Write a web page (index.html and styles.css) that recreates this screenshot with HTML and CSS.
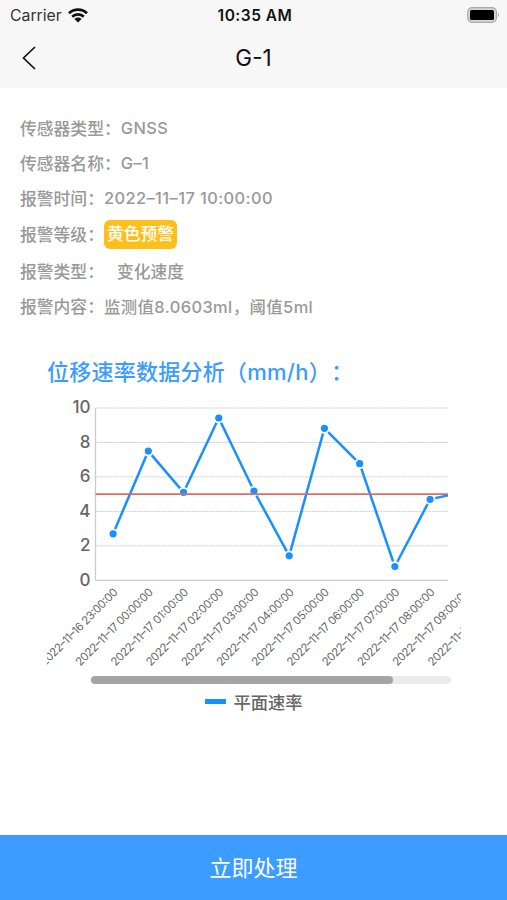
FILE: index.html
```html
<!DOCTYPE html>
<html lang="zh-CN">
  <head>
    <meta charset="UTF-8" />
    <title>G-1</title>
    <meta name="viewport" content="width=device-width, initial-scale=1.0" />
    <link rel="stylesheet" href="styles.css">
  </head>
  <body>
    <header>
      <div class="status-bar">
        <div class="carrier">
          <span>Carrier</span>
          <svg width="20" height="15" viewBox="0 0 20 15">
            <g fill="none" stroke="#111" stroke-width="2.7">
              <path d="M1 5.2 A13 13 0 0 1 19 5.2" />
              <path d="M4.2 8.7 A8.3 8.3 0 0 1 15.8 8.7" />
            </g>
            <path d="M6.4 11 A5.1 5.1 0 0 1 13.6 11 L10 14.6 Z" fill="#111" />
          </svg>
        </div>
        <div class="time">10:35 AM</div>
        <svg class="battery" width="34" height="17" viewBox="0 0 34 17">
          <rect x="1.7" y="0.7" width="28.8" height="14.6" rx="4.5" fill="#d4d4d4" stroke="#aaa" stroke-width="1.2" />
          <rect x="4" y="3" width="24" height="10" rx="1.5" fill="#000" />
          <path d="M32 5.7 Q34 7.9 32 10.1 Z" fill="#aaa" />
        </svg>
      </div>
      <div class="nav-bar">
        <svg class="back" width="14" height="24" viewBox="0 0 14 24">
          <path d="M13 1 L1.5 12 L13 23" fill="none" stroke="#111" stroke-width="1.7" />
        </svg>
        <h1>G-1</h1>
      </div>
    </header>

    <main>
      <div class="info">
        <p><span class="label">传感器类型：</span><span class="value">GNSS</span></p>
        <p><span class="label">传感器名称：</span><span class="value">G–1</span></p>
        <p><span class="label">报警时间：</span><span class="value">2022–11–17 10:00:00</span></p>
        <p class="level"><span class="label">报警等级：</span><span class="tag">黄色预警</span></p>
        <p><span class="label">报警类型：</span><span class="value indent">变化速度</span></p>
        <p><span class="label">报警内容：</span><span class="value">监测值8.0603ml，阈值5ml</span></p>
      </div>

      <section class="chart">
        <h2>位移速率数据分析（mm/h）：</h2>
        <svg id="chart" width="414" height="272" viewBox="0 0 414 272"></svg>
        <div class="scroll"><div class="thumb"></div></div>
        <div class="legend"><i></i><span>平面速率</span></div>
      </section>
    </main>

    <button class="submit">立即处理</button>

    <script>
      const chart = document.getElementById("chart");
      const values = [2.7, 7.5, 5.1, 9.42, 5.18, 1.42, 8.82, 6.77, 0.8, 4.7, 5.15];
      const labelCount = 12;
      const left = 48.5;
      const right = 401;
      const top0 = 13;
      const bottom = 185.3;
      const step = 35.22;

      const px = (i) => left + 17.6 + i * step;
      const py = (v) => bottom - (v * (bottom - top0)) / 10;

      function add(name, attrs, text) {
        const el = document.createElementNS("http://www.w3.org/2000/svg", name);
        for (let key in attrs) {
          el.setAttribute(key, attrs[key]);
        }
        if (text) el.textContent = text;
        chart.appendChild(el);
        return el;
      }

      // grid and y axis
      for (let v = 0; v <= 10; v += 2) {
        add("line", { x1: left, x2: right, y1: py(v), y2: py(v), class: v ? "grid" : "axis" });
        add("text", { x: 43.5, y: py(v) + 5.2, class: "y-label" }, String(v));
      }
      add("line", { x1: left, x2: left, y1: top0, y2: bottom, class: "axis" });

      // data line
      for (let i = 0; i < values.length - 1; i++) {
        let x2 = px(i + 1);
        let y2 = py(values[i + 1]);
        if (x2 > right) {
          y2 = py(values[i]) + ((y2 - py(values[i])) * (right - px(i))) / step;
          x2 = right;
        }
        add("line", { x1: px(i), y1: py(values[i]), x2: x2, y2: y2, class: "series" });
      }
      for (let i = 0; i < values.length - 1; i++) {
        add("circle", { cx: px(i), cy: py(values[i]), r: 4.5, class: "dot" });
      }

      // alarm threshold
      add("line", { x1: left, x2: right, y1: py(5), y2: py(5), class: "limit" });

      // x axis
      for (let i = 0; i < labelCount; i++) {
        const hour = String((i + 23) % 24).padStart(2, "0");
        const day = i === 0 ? "16" : "17";
        const x = px(i) + 5.5;
        const y = 198;
        add(
          "text",
          { x: x, y: y, textLength: 104, transform: `rotate(-45 ${x} ${y})`, class: "x-label" },
          `2022–11–${day} ${hour}:00:00`
        );
      }
    </script>
  </body>
</html>
```
FILE: styles.css
```css
* {
  box-sizing: border-box;
}

body {
  margin: 0;
  height: 900px;
  display: flex;
  flex-direction: column;
  overflow: hidden;
  background: #fff;
  font-family: Inter, "Noto Sans CJK SC", sans-serif;
}

header {
  height: 88px;
  background: #f7f7f7;
}

.status-bar {
  display: grid;
  grid-template-columns: 1fr auto 1fr;
  align-items: center;
  height: 30px;
  padding: 0 7px 0 10px;
  color: #333;
  font-size: 15.8px;
}

.carrier {
  display: flex;
  align-items: center;
  gap: 6px;
}

.time {
  color: #111;
  font-size: 15.5px;
  font-weight: 600;
  letter-spacing: 0.5px;
}

.battery {
  justify-self: end;
}

.nav-bar {
  display: grid;
  grid-template-columns: 1fr auto 1fr;
  align-items: center;
  height: 56px;
  padding: 0 22px;
}

h1 {
  margin: -2px 0 0;
  color: #111;
  font-size: 22.5px;
  font-weight: 400;
}

main {
  flex: 1;
}

.info {
  padding: 22px 20px 0;
}

.info p {
  display: flex;
  align-items: center;
  height: 35.2px;
  margin: 0;
  color: #999;
  font-size: 16.8px;
  font-weight: 500;
  white-space: nowrap;
}

.info .level {
  height: 38px;
  padding-bottom: 1px;
}

.value {
  font-size: 16.4px;
  letter-spacing: 0.42px;
}

.indent {
  margin-left: 13px;
  font-size: 16.8px;
  letter-spacing: 0;
}

.tag {
  height: 29px;
  padding: 0 3px;
  border-radius: 6px;
  background: #ffbf1a;
  color: #fff;
  font-size: 16.8px;
  line-height: 28px;
}

.chart {
  width: 414px;
  margin: 29px 0 0 47px;
}

h2 {
  height: 42px;
  margin: 0;
  color: #3c9cff;
  font-size: 22px;
  font-weight: 500;
  letter-spacing: 0.25px;
  line-height: 39px;
  white-space: nowrap;
  text-spacing-trim: space-all;
}

#chart {
  display: block;
}

.axis {
  stroke: #ccc;
  stroke-width: 1.3;
}

.grid {
  stroke: #ccc;
  stroke-dasharray: 2 1;
}

.y-label {
  fill: #666;
  font-size: 17px;
  font-weight: 500;
  text-anchor: end;
}

.x-label {
  fill: #666;
  font-size: 11.3px;
  text-anchor: end;
}

.series {
  stroke: #1890ff;
  stroke-width: 2.5;
}

.dot {
  fill: #1890ff;
  stroke: #fff;
  stroke-width: 1.8;
}

.limit {
  stroke: #de6c64;
  stroke-width: 1.8;
}

.scroll {
  width: 360px;
  height: 8px;
  margin: 9px 0 0 44px;
  border-radius: 4px;
  background: #ebebeb;
}

.thumb {
  width: 302px;
  height: 8px;
  border-radius: 4px;
  background: #a5a5a5;
}

.legend {
  display: flex;
  align-items: center;
  justify-content: center;
  gap: 7px;
  height: 36px;
  color: #666;
  font-size: 17.3px;
  font-weight: 500;
}

.legend i {
  width: 21px;
  height: 5px;
  background: #1890ff;
}

.submit {
  height: 65px;
  padding: 0 0 4px;
  border: none;
  background: #3c9cff;
  color: #fff;
  font-family: inherit;
  font-size: 22px;
}
```
